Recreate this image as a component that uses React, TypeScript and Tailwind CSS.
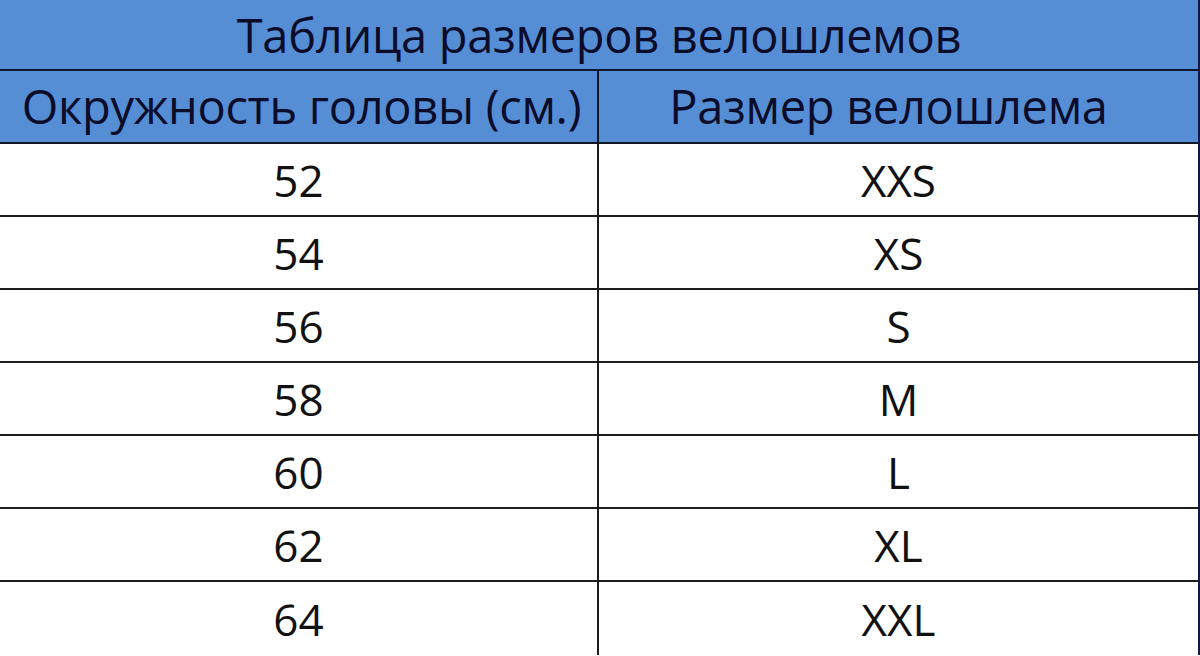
const rows = [
  ["52", "XXS"],
  ["54", "XS"],
  ["56", "S"],
  ["58", "M"],
  ["60", "L"],
  ["62", "XL"],
  ["64", "XXL"],
];

export default function App() {
  return (
    <div
      className="w-[1200px] h-[656px] overflow-hidden bg-white"
      style={{ fontFamily: '"Open Sans", "Noto Sans", sans-serif' }}
    >
      <div className="border-r-2 border-[#101a4a]">
        {/* Title */}
        <div className="h-[71px] bg-[#558ed5] flex items-center justify-center pt-[2px] text-[47px] leading-none text-[#0b0b2a] tracking-[-0.3px] border-b-2 border-[#0e1530]">
          Таблица размеров велошлемов
        </div>

        {/* Column headers */}
        <div className="grid grid-cols-[599px_1fr] h-[73px] bg-[#558ed5] text-[47px] leading-none text-[#0b0b2a] tracking-[-0.3px] border-b-2 border-[#121622]">
          <div className="flex items-center justify-center pl-[6px] border-r-2 border-[#121622]">
            Окружность головы (см.)
          </div>
          <div className="flex items-center justify-center pr-[20px]">Размер велошлема</div>
        </div>

        {/* Data rows */}
        {rows.map(([head, size], i) => (
          <div
            key={head}
            className={
              "grid grid-cols-[599px_1fr] h-[73px] text-[44px] leading-none text-[#111] " +
              (i < rows.length - 1 ? "border-b-2 border-[#1c1c1c]" : "")
            }
          >
            <div className="flex items-center justify-center border-r-2 border-[#1c1c1c]">
              {head}
            </div>
            <div className="flex items-center justify-center">{size}</div>
          </div>
        ))}
      </div>
    </div>
  );
}
